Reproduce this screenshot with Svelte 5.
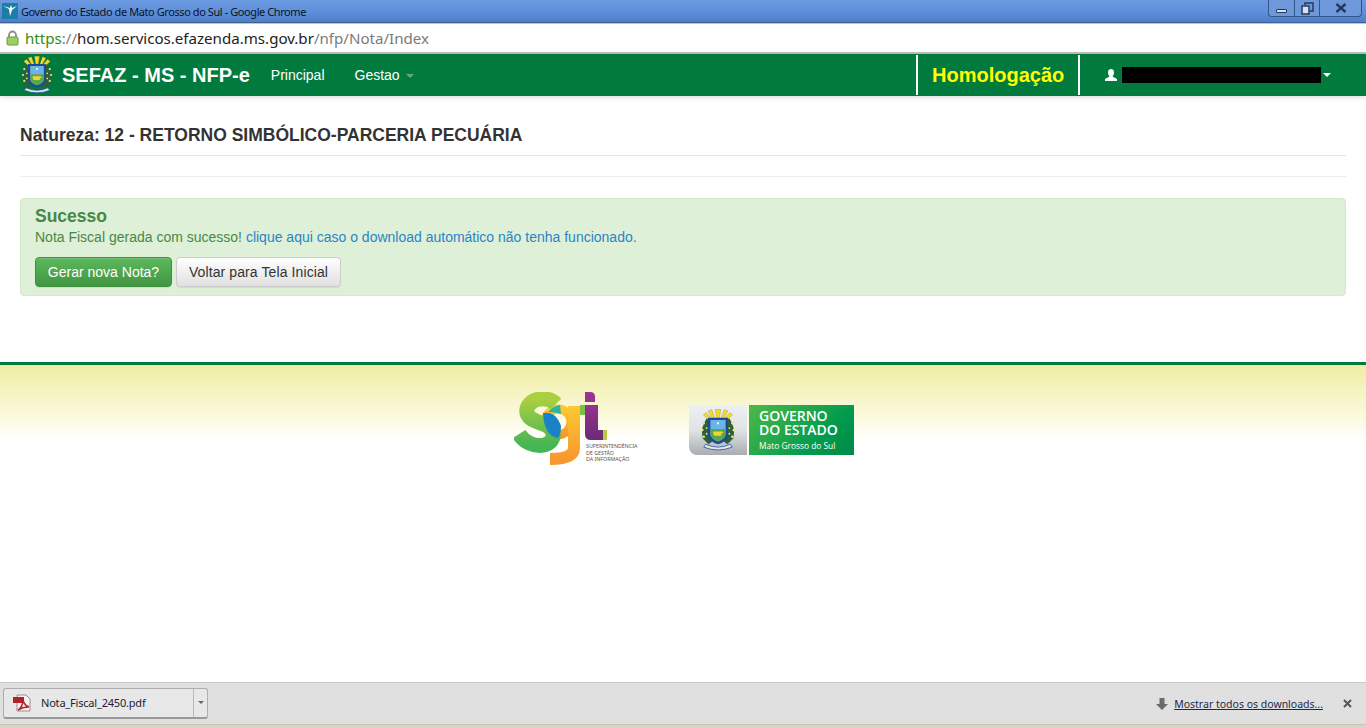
<script>
  let navLinks = ["Principal", "Gestao"];
</script>

{#snippet arms(w, h)}
  <svg class="arms" width={w} height={h} viewBox="0 0 40 44">
    <g fill="#f4d92a" stroke="#8a7a20" stroke-width=".3">
      <path d="M18.500 9 17 0h6l-1.500 9z" />
      <path d="M14 10 9.500 2l4-1.500L16.500 9z" />
      <path d="M26 10l4.500-8-4-1.500L23.500 9z" />
      <path d="M11 12 4.500 6l3-2.500L13 10z" />
      <path d="M29 12l6.500-6-3-2.500L27 10z" />
    </g>
    <path d="M8 10Q1 20 4 31l6 6 4-3V12z" fill="#2c5f3c" />
    <path d="M32 10q7 10 4 21l-6 6-4-3V12z" fill="#2c5f3c" />
    <g fill="#eee86a">
      <circle cx="5" cy="15" r="1.300" /><circle cx="35" cy="15" r="1.300" />
      <circle cx="3.500" cy="22" r="1.300" /><circle cx="36.500" cy="22" r="1.300" />
      <circle cx="5" cy="29" r="1.300" /><circle cx="35" cy="29" r="1.300" />
      <circle cx="8" cy="20" r="1" /><circle cx="32" cy="20" r="1" />
      <circle cx="8" cy="26" r="1" /><circle cx="32" cy="26" r="1" />
    </g>
    <path d="M9.500 9h21v18q0 7-10.500 10Q9.500 34 9.500 27z" fill="#1f4a96" />
    <path d="M12 11.500h16V26q0 5.500-8 8-8-2.500-8-8z" fill="#6db4e6" />
    <path d="M12 21h16v5q0 5.500-8 8-8-2.500-8-8z" fill="#58a94c" />
    <path d="M15 23.500h9l2 1.500-2 .5-1 2.500h-7l-1-2.500z" fill="#f0d534" />
    <circle cx="20" cy="15" r="1.200" fill="#fff" />
    <path d="M7 37q13 6 26 0l2 3q-15 6-30 0z" fill="#dfe7f2" stroke="#1f4a96" stroke-width=".8" />
  </svg>
{/snippet}

<div class="chrome-title">
  <div class="favicon">
    <svg width="16" height="16" viewBox="0 0 16 16">
      <rect width="16" height="16" rx="1" fill="#1c7ea4" />
      <path d="M1 3l6 3 1 7 2-6 5-4-5 2-1-3-1 3z" fill="#fff" />
    </svg>
  </div>
  <span class="window-name">Governo do Estado de Mato Grosso do Sul - Google Chrome</span>
  <div class="window-buttons">
    <span class="wb wb-min"><i></i></span>
    <span class="wb wb-max">
      <svg width="13" height="13" viewBox="0 0 13 13" fill="none" stroke="#26395f" stroke-width="1.500">
        <rect x="1" y="4" width="7" height="8" fill="#d6e0f2" />
        <path d="M4 3V1h8v8h-3" />
      </svg>
    </span>
    <span class="wb wb-close">
      <svg width="12" height="10" viewBox="0 0 12 10" stroke="#26395f" stroke-width="2.400">
        <path d="M1.500 1l9 8M10.500 1l-9 8" />
      </svg>
    </span>
  </div>
</div>

<div class="address-bar">
  <svg class="lock" width="13" height="16" viewBox="0 0 13 16">
    <path d="M3 8V5a3.500 3.500 0 0 1 7 0v3" fill="none" stroke="#8d8d8d" stroke-width="1.800" />
    <rect x="1" y="7" width="11" height="8" rx="1" fill="#9ccf63" stroke="#6d9a3c" />
  </svg>
  <span class="url"><span class="scheme">https</span><span class="path">://</span><span class="host">hom.servicos.efazenda.ms.gov.br</span><span class="path">/nfp/Nota/Index</span></span>
</div>

<nav class="navbar">
  <a class="brand" href="#top">
    {@render arms(34, 38)}
    <span>SEFAZ - MS - NFP-e</span>
  </a>
  <ul class="nav-links">
    {#each navLinks as link}
      <li>{link}{#if link === "Gestao"}<b class="caret muted"></b>{/if}</li>
    {/each}
  </ul>
  <div class="env">Homologação</div>
  <div class="user">
    <svg width="12" height="12" viewBox="0 0 12 12">
      <path d="M6 0c2 0 3 1.500 3 3.500S8 6.500 7.500 7.500L12 10v2H0v-2l4.500-2.500C4 6.500 3 5.500 3 3.500S4 0 6 0z" fill="#fff" />
    </svg>
    <span class="redacted"></span>
    <b class="caret"></b>
  </div>
</nav>

<main>
  <h4>Natureza: 12 - RETORNO SIMBÓLICO-PARCERIA PECUÁRIA</h4>
  <hr />
  <div class="alert">
    <h4 class="alert-title">Sucesso</h4>
    <p>Nota Fiscal gerada com sucesso! <a href="#top">clique aqui caso o download automático não tenha funcionado.</a></p>
    <div class="actions">
      <button class="btn btn-success">Gerar nova Nota?</button>
      <button class="btn btn-default">Voltar para Tela Inicial</button>
    </div>
  </div>
</main>

<footer>
  <div class="sgi">
    <svg width="94" height="74" viewBox="0 0 94 74">
      <defs>
        <linearGradient id="sg" x1="0" y1="0" x2="0" y2="1">
          <stop offset="0" stop-color="#a9d041" />
          <stop offset="1" stop-color="#46b555" />
        </linearGradient>
        <linearGradient id="gg" x1="0" y1="0" x2="0" y2="1">
          <stop offset="0" stop-color="#fdc832" />
          <stop offset="1" stop-color="#f7982e" />
        </linearGradient>
        <linearGradient id="ig" x1="0" y1="0" x2="0" y2="1">
          <stop offset="0" stop-color="#96348f" />
          <stop offset="1" stop-color="#6c2a76" />
        </linearGradient>
      </defs>
      <circle cx="44" cy="30" r="13" fill="none" stroke="url(#gg)" stroke-width="9" />
      <path d="M60 14V56Q60 67 36 67" fill="none" stroke="url(#gg)" stroke-width="12" />
      <path d="M42 12C34 4 16 5 13 17 11 28 26 30 32 33 42 37 42 50 30 53 20 55 10 50 5 42" fill="none" stroke="url(#sg)" stroke-width="15" />
      <path d="M34 20q5-6 12-7l1 9q-6-2-13-2z" fill="#2bb59a" />
      <path d="M29 21Q42 19 47 34 47 42 44 46 30 44 29 21z" fill="#1c82c6" />
      <path d="M71 0h5q5 0 5 5v5H71z" fill="#96348f" />
      <path d="M71 13h13v25h5v10H77q-6 0-6-6z" fill="url(#ig)" />
      <rect x="66" y="13" width="5" height="10" fill="#7cc04a" />
      <rect x="89" y="38" width="4" height="10" fill="#b5cf3a" />
    </svg>
    <span class="sgi-text">SUPERINTENDÊNCIA<br />DE GESTÃO<br />DA INFORMAÇÃO</span>
  </div>
  <div class="gov">
    <div class="gov-arms">{@render arms(38, 42)}</div>
    <div class="gov-text">
      <strong>GOVERNO<br />DO ESTADO</strong>
      <small>Mato Grosso do Sul</small>
    </div>
  </div>
</footer>

<div class="spacer"></div>

<div class="downloads">
  <div class="item">
    <div class="file">
      <svg width="18" height="18" viewBox="0 0 18 18">
        <path d="M4 1h9l4 4v12H4z" fill="#f5f2f2" stroke="#a88" />
        <rect x="0" y="3" width="11" height="6" fill="#b3212a" />
        <path d="M5 16c3-2 5-6 5-10 1 4 3 6 6 7-4-.500-7 .500-11 3z" fill="none" stroke="#b3212a" stroke-width="1.500" />
      </svg>
      <span>Nota_Fiscal_2450.pdf</span>
    </div>
    <div class="more"><b class="tiny-caret"></b></div>
  </div>
  <div class="show-all">
    <svg width="12" height="12" viewBox="0 0 12 12"><path d="M3.500 0h5v6H12L6 12 0 6h3.500z" fill="#6b6b6b" /></svg>
    <a href="#top">Mostrar todos os downloads...</a>
    <svg class="x" width="9" height="9" viewBox="0 0 9 9" stroke="#555" stroke-width="2"><path d="M1 1l7 7M8 1l-7 7" /></svg>
  </div>
</div>
<div class="os-edge"></div>

<style>
  :global(body) {
    background: #fff;
    overflow: hidden;
  }
  :global(#app) {
    display: flex;
    flex-direction: column;
    height: 728px;
    font-family: "Liberation Sans", Arial, sans-serif;
    font-size: 14px;
    color: #333;
  }

  .chrome-title {
    height: 23px;
    display: flex;
    align-items: center;
    padding-left: 2px;
    background: linear-gradient(#6c9ae0, #5f90dc 50%, #4f7ec8);
    border-bottom: 1px solid #3d6296;
    box-sizing: border-box;
    flex: none;
  }
  .favicon {
    display: flex;
    margin-right: 3px;
  }
  .window-name {
    font: 11px "Noto Sans", Tahoma, sans-serif;
    letter-spacing: -0.42px;
    color: #0c1424;
  }
  .window-buttons {
    margin-left: auto;
    margin-right: 4px;
    align-self: flex-start;
    display: flex;
    height: 16px;
    border: 1px solid #34558c;
    border-top: 0;
    border-radius: 0 0 4px 4px;
    background: #6f98da;
  }
  .wb {
    display: flex;
    align-items: center;
    justify-content: center;
    border-left: 1px solid #34558c;
    width: 24px;
  }
  .wb:first-child {
    border-left: 0;
    width: 25px;
  }
  .wb-close {
    width: 41px;
  }
  .wb-min i {
    display: block;
    width: 11px;
    height: 4px;
    margin-top: 5px;
    background: #d6e0f2;
    border: 1px solid #26395f;
    box-sizing: border-box;
    border-radius: 1px;
  }

  .address-bar {
    height: 31px;
    box-sizing: border-box;
    border-top: 1px solid #c4c4c4;
    border-bottom: 2px solid #c0c0c0;
    background: #fff;
    display: flex;
    align-items: center;
    padding-left: 6px;
    flex: none;
  }
  .lock {
    margin-right: 6px;
  }
  .url {
    font: 15.100px "Noto Sans", Tahoma, sans-serif;
  }
  .scheme {
    color: #2f8f14;
  }
  .host {
    color: #222;
  }
  .path {
    color: #7b7b7b;
  }

  .navbar {
    height: 42px;
    flex: none;
    display: flex;
    align-items: stretch;
    background: #007a3d;
    box-shadow: 0 1px 5px rgba(0, 0, 0, 0.16);
    padding-left: 20px;
    color: #fff;
    position: relative;
  }
  .brand {
    display: flex;
    align-items: center;
    gap: 8px;
    color: #fff;
    text-decoration: none;
    font-size: 20px;
    font-weight: bold;
  }
  .arms {
    display: block;
  }
  .nav-links {
    list-style: none;
    display: flex;
    align-items: center;
    gap: 30px;
    margin: 0 0 0 21px;
    padding: 0;
    font-size: 14px;
  }
  .caret {
    display: inline-block;
    width: 0;
    height: 0;
    border: 4px solid transparent;
    border-top-color: #fff;
    border-bottom: 0;
  }
  .caret.muted {
    border-top-color: #67a884;
    margin-left: 6px;
    vertical-align: 2px;
  }
  .env {
    margin-left: auto;
    margin-top: 1px;
    margin-bottom: 1px;
    width: 164px;
    box-sizing: border-box;
    border-left: 2px solid #fff;
    border-right: 2px solid #fff;
    padding-left: 14px;
    display: flex;
    align-items: center;
    color: #ff0;
    font-size: 20px;
    font-weight: bold;
  }
  .user {
    width: 286px;
    box-sizing: border-box;
    padding-left: 25px;
    display: flex;
    align-items: center;
  }
  .redacted {
    width: 199px;
    height: 16px;
    background: #000;
    margin-left: 5px;
    margin-right: 2px;
  }

  main {
    padding: 0 20px;
    flex: none;
  }
  h4 {
    margin: 29px 0 0;
    font-size: 17.500px;
    line-height: 20px;
    color: #333;
    padding-bottom: 10px;
    border-bottom: 1px solid #e5e5e5;
  }
  hr {
    border: 0;
    border-top: 1px solid #eee;
    margin: 20px 0 21px;
  }
  .alert {
    height: 98px;
    box-sizing: border-box;
    padding: 8px 14px;
    background: #dff0d8;
    border: 1px solid #d6e9c6;
    border-radius: 4px;
    color: #468847;
  }
  .alert-title {
    margin: 0;
    padding: 0;
    border: 0;
    font-size: 17.500px;
    line-height: 19px;
    color: #468847;
  }
  .alert p {
    margin: 1px 0 0;
    line-height: 20px;
    font-size: 14px;
  }
  .alert a {
    color: #2a85c4;
    text-decoration: none;
  }
  .actions {
    display: flex;
    gap: 4px;
    margin-top: 10px;
  }
  .btn {
    height: 30px;
    box-sizing: border-box;
    padding: 0;
    white-space: nowrap;
    font: 14px "Liberation Sans", Arial, sans-serif;
    border-radius: 4px;
    border: 1px solid #ccc;
    box-shadow: inset 0 1px 0 rgba(255, 255, 255, 0.15), 0 1px 1px rgba(0, 0, 0, 0.075);
  }
  .btn-success {
    width: 137px;
    color: #fff;
    background: linear-gradient(#5cb85c, #419641);
    border-color: #3e8f3e;
  }
  .btn-default {
    width: 165px;
    color: #333;
    letter-spacing: 0.1px;
    background: linear-gradient(#fff, #e0e0e0);
    border-color: #ccc;
  }

  footer {
    margin-top: 66px;
    flex: none;
    height: 120px;
    border-top: 3px solid #007a3d;
    background: linear-gradient(#f0eda4, #fbfadf 45%, #fff 65%);
    display: flex;
    justify-content: center;
    align-items: flex-start;
    padding-left: 2px;
    box-sizing: border-box;
  }
  .sgi {
    position: relative;
    width: 175px;
    margin-top: 27px;
  }
  .sgi svg {
    display: block;
  }
  .sgi-text {
    position: absolute;
    left: 72px;
    top: 51px;
    font: 5.300px/6.500px "Noto Sans", sans-serif;
    color: #555;
    white-space: nowrap;
  }
  .gov {
    display: flex;
    margin-top: 40px;
    height: 50px;
  }
  .gov-arms {
    width: 58px;
    background: linear-gradient(#eef1f4, #dfe3e6 50%, #a9adb0);
    border-radius: 0 0 0 8px;
    display: flex;
    align-items: center;
    justify-content: center;
  }
  .gov-text {
    margin-left: 2px;
    width: 105px;
    padding: 4px 0 0 10px;
    box-sizing: border-box;
    background: linear-gradient(135deg, #4eb848, #009a4e 70%, #008a46);
    color: #fff;
    font-family: "Open Sans", sans-serif;
  }
  .gov-text strong {
    display: block;
    font-size: 14px;
    line-height: 14px;
    font-weight: 600;
  }
  .gov-text small {
    display: block;
    font-size: 8.400px;
    line-height: 13px;
    margin-top: 2px;
  }

  .spacer {
    flex: 1;
  }
  .downloads {
    height: 42px;
    flex: none;
    box-sizing: border-box;
    border-top: 1px solid #c9c9c9;
    background: #e0e0e0;
    display: flex;
    align-items: center;
    padding: 0 14px 0 3px;
    font: 11px "Noto Sans", Tahoma, sans-serif;
  }
  .item {
    display: flex;
    width: 205px;
    height: 31px;
    margin-top: -1px;
    box-sizing: border-box;
    border: 1px solid #aeaeae;
    border-bottom: 2px solid #999;
    border-radius: 3px;
    background: #e8e8e8;
  }
  .file {
    flex: 1;
    display: flex;
    align-items: center;
    gap: 10px;
    padding-left: 9px;
    color: #1c2233;
    letter-spacing: -0.2px;
  }
  .more {
    width: 13px;
    border-left: 1px solid #b8b8b8;
    display: flex;
    align-items: center;
    justify-content: center;
  }
  .tiny-caret {
    width: 0;
    height: 0;
    border: 3px solid transparent;
    border-top-color: #666;
    border-bottom: 0;
  }
  .show-all {
    margin-left: auto;
    display: flex;
    align-items: center;
  }
  .show-all a {
    margin-left: 6px;
    color: #1c2a4d;
    font-size: 10.500px;
    text-decoration: underline;
  }
  .x {
    margin-left: 20px;
  }
  .os-edge {
    height: 4px;
    flex: none;
    background: #d9d4c8;
    border-top: 1px solid #c8c2b4;
    box-sizing: border-box;
  }
</style>
